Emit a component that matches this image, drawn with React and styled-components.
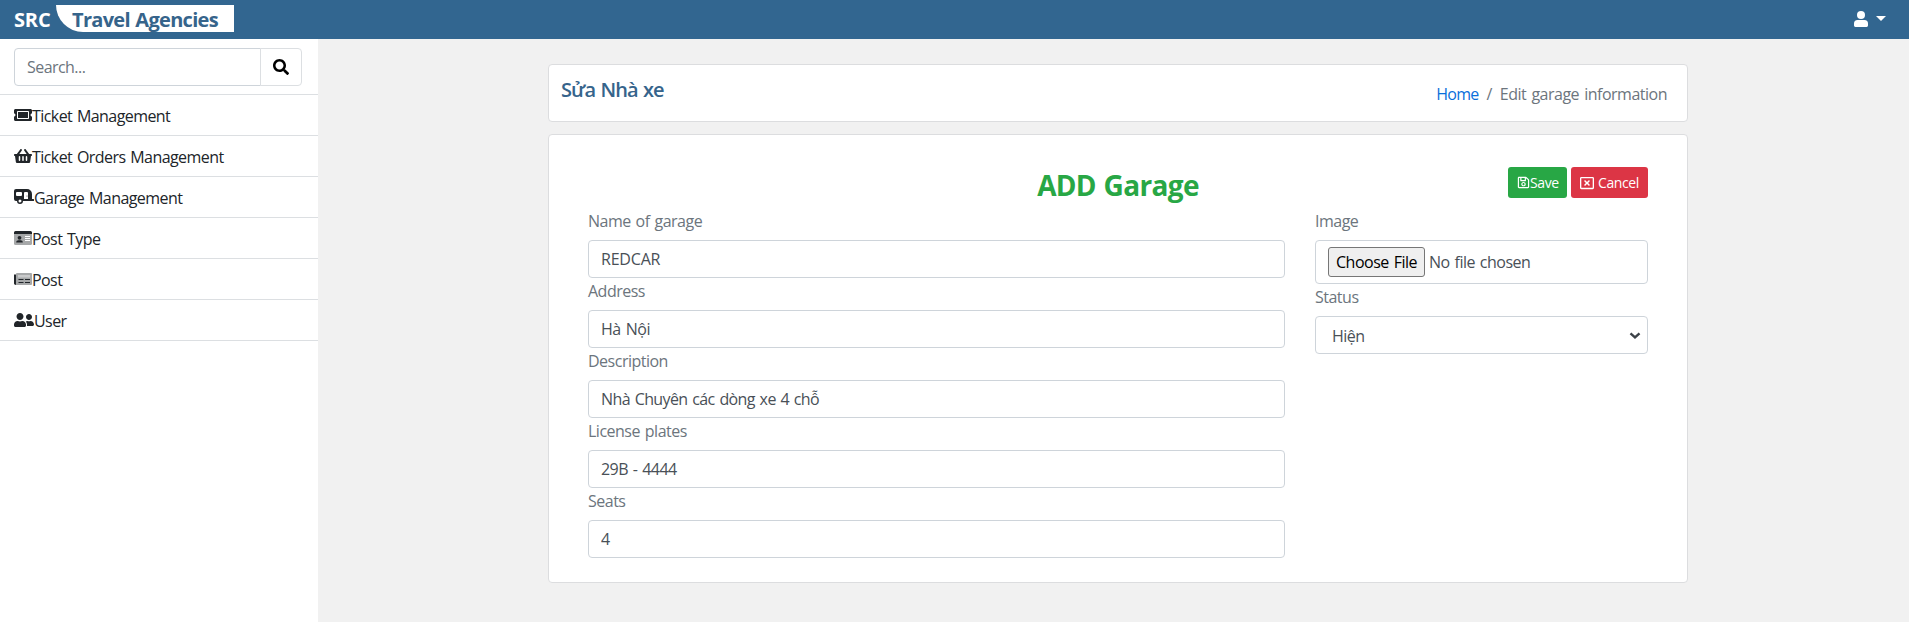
import React from 'react';
import styled, { createGlobalStyle } from 'styled-components';
import { FaTicketAlt, FaShoppingBasket, FaCaravan, FaUserFriends, FaSearch, FaRegSave, FaRegWindowClose } from 'react-icons/fa';

const Global = createGlobalStyle`
  *, *::before, *::after { box-sizing: border-box; }
  body {
    margin: 0;
    background: #f1f1f1;
    color: #212529;
    font: 16px/24px "Segoe UI", "Open Sans", "Noto Sans", sans-serif;
  }
  input, select, button { font: inherit; letter-spacing: inherit; word-spacing: inherit; }
`;

const Page = styled.div`
  display: flex;
  flex-direction: column;
  min-height: 622px;
`;

const Header = styled.header`
  display: flex;
  align-items: center;
  justify-content: space-between;
  height: 39px;
  padding: 0 23px 0 14px;
  background: #326690;
  color: #fff;
`;

const Brand = styled.div`
  display: flex;
  align-items: center;
  gap: 5px;
  font-size: 20px;
  font-weight: 700;
  line-height: 27px;
  white-space: nowrap;
`;

const BrandName = styled.span`
  width: 37px;
  letter-spacing: -0.15px;
`;

const BrandTag = styled.span`
  width: 178px;
  height: 27px;
  margin-top: -2px;
  padding: 1px 0 0 16px;
  border-bottom-left-radius: 27px;
  background: #fff;
  color: #36648b;
  letter-spacing: -0.7px;
  word-spacing: 1px;
`;

const UserMenu = styled.div`
  display: flex;
  align-items: center;
  gap: 8px;
  padding-bottom: 1px;
`;

const Caret = styled.span`
  margin-top: -1px;
  border: 5px solid transparent;
  border-top-color: #fff;
  border-bottom: 0;
`;

const Body = styled.div`
  display: flex;
  flex: 1;
`;

const Sidebar = styled.aside`
  width: 318px;
  background: #fff;
`;

const SearchBar = styled.div`
  display: flex;
  height: 56px;
  padding: 9px 16px 9px 14px;
  border-bottom: 1px solid #dcdfe2;
`;

const SearchInput = styled.input`
  width: 247px;
  height: 38px;
  padding: 6px 12px;
  border: 1px solid #ced4da;
  border-radius: 4px 0 0 4px;
  letter-spacing: -0.55px;
  &::placeholder { color: #6c757d; }
`;

const SearchButton = styled.button`
  display: flex;
  align-items: center;
  justify-content: center;
  width: 42px;
  height: 38px;
  margin-left: -1px;
  padding: 0;
  border: 1px solid #dcdfe2;
  border-radius: 0 4px 4px 0;
  background: #fff;
  color: #000;
`;

const MenuItem = styled.a`
  display: flex;
  align-items: center;
  height: 41px;
  padding-left: 14px;
  border-bottom: 1px solid #dcdfe2;
  color: #212529;
  letter-spacing: -0.57px;
  word-spacing: 1.2px;
  svg { flex: none; }
  span { padding-top: 1px; }
`;

const Main = styled.main`
  display: flex;
  flex-direction: column;
  gap: 12px;
  width: 1140px;
  margin: 25px 0 0 230px;
`;

const Card = styled.section`
  border: 1px solid #dcdddf;
  border-radius: 4px;
  background: #fff;
`;

const TitleCard = styled(Card)`
  display: flex;
  justify-content: space-between;
  height: 58px;
  padding: 13px 20px 0 12px;
`;

const PageTitle = styled.h1`
  margin: 0;
  color: #36648b;
  font-size: 20px;
  font-weight: 600;
  line-height: 24px;
  letter-spacing: -0.9px;
  word-spacing: 1px;
`;

const Breadcrumb = styled.nav`
  display: flex;
  gap: 8px;
  padding-top: 4px;
  color: #6c757d;
  letter-spacing: -0.5px;
  word-spacing: 1.5px;
`;

const HomeLink = styled.a`
  color: #0a6fdb;
  letter-spacing: -0.75px;
`;

const FormCard = styled(Card)`
  height: 449px;
  padding: 32px 39px 0;
`;

const FormHead = styled.div`
  display: grid;
  grid-template-columns: 1fr auto 1fr;
  height: 41px;
`;

const FormTitle = styled.h2`
  grid-column: 2;
  margin: 0;
  color: #28a745;
  font-size: 28px;
  font-weight: 700;
  line-height: 36px;
  letter-spacing: -0.65px;
  word-spacing: 1px;
`;

const Actions = styled.div`
  display: flex;
  justify-content: flex-end;
  gap: 4px;
`;

const ActionButton = styled.button`
  display: flex;
  align-items: center;
  gap: ${(p) => p.$gap}px;
  width: ${(p) => p.$width}px;
  height: 31px;
  padding: 0 0 0 9px;
  border: 0;
  border-radius: 3px;
  background: ${(p) => p.$color};
  color: #fff;
  font-size: 14px;
  letter-spacing: -0.4px;
  svg { flex: none; }
  span { padding-top: 1px; }
`;

const Columns = styled.div`
  display: grid;
  grid-template-columns: 697px 333px;
  gap: 30px;
  align-items: start;
`;

const Field = styled.label`
  display: flex;
  flex-direction: column;
  gap: 8px;
  padding-top: 2px;
  color: #6c757d;
  line-height: 22px;
  letter-spacing: -0.5px;
  word-spacing: 1.2px;
`;

const Control = styled.input`
  width: 100%;
  height: 38px;
  padding: 6px 12px;
  border: 1px solid #ced4da;
  border-radius: 4px;
  background: #fff;
  color: #495057;
  letter-spacing: ${(p) => p.$track ?? -0.45}px;
`;

const FileControl = styled.div`
  display: flex;
  align-items: center;
  gap: 4px;
  height: 44px;
  padding: 0 12px;
  border: 1px solid #ced4da;
  border-radius: 4px;
  color: #495057;
`;

const FileButton = styled.button`
  width: 97px;
  height: 30px;
  padding: 0;
  border: 1px solid #767676;
  border-radius: 3px;
  background: #efefef;
  color: #000;
  white-space: nowrap;
`;

const SelectBox = styled.div`
  display: flex;
  align-items: center;
  justify-content: space-between;
  height: 38px;
  padding: 2px 6px 0 16px;
  border: 1px solid #ced4da;
  border-radius: 4px;
  color: #495057;
`;

const PersonIcon = () => (
  <svg width="14" height="16" viewBox="0 0 14 16" fill="currentColor">
    <circle cx="7" cy="4" r="4" />
    <path d="M3.6 9h6.8A3.6 3.6 0 0 1 14 12.6v2A1.4 1.4 0 0 1 12.6 16H1.4A1.4 1.4 0 0 1 0 14.6v-2A3.6 3.6 0 0 1 3.6 9z" />
  </svg>
);

const CardIcon = () => (
  <svg width="18" height="16" viewBox="0 0 18 16">
    <path fill="#212529" d="M1.5 1h15A1.5 1.5 0 0 1 18 2.5V4H0V2.5A1.5 1.5 0 0 1 1.5 1z" />
    <path fill="#a6a8a9" d="M0 4h18v9.5a1.5 1.5 0 0 1-1.5 1.5h-15A1.5 1.5 0 0 1 0 13.5z" />
    <circle cx="5.5" cy="7.8" r="1.9" fill="#212529" />
    <path fill="#212529" d="M2.2 12.5c0-1.5 1-2.3 2.2-2.3h2.2c1.2 0 2.2.8 2.2 2.3z" />
    <path stroke="#fff" d="M11 6.5h5M11 8.5h5M11 10.5h5" />
  </svg>
);

const NewsIcon = () => (
  <svg width="18" height="16" viewBox="0 0 18 16">
    <path fill="#212529" d="M0 3.5h2V14C.8 14 0 13.3 0 12.3z" />
    <path fill="#a6a8a9" d="M3 2h14a1 1 0 0 1 1 1v10a1 1 0 0 1-1 1H2V3a1 1 0 0 1 1-1z" />
    <path fill="#c9cacb" d="M4 4h12v2.5H4z" />
    <path stroke="#212529" d="M4.5 8.5h5M4.5 11.5h5M11 8.5h5M11 11.5h5" />
  </svg>
);

const Chevron = () => (
  <svg width="12" height="8" viewBox="0 0 12 8" fill="none" stroke="#3c4248" strokeWidth="2.4">
    <path d="M1.5 1.3 6 5.4l4.5-4.1" />
  </svg>
);

const MENU = [
  { text: 'Ticket Management', icon: <FaTicketAlt size={18} /> },
  { text: 'Ticket Orders Management', icon: <FaShoppingBasket size={18} /> },
  { text: 'Garage Management', icon: <FaCaravan size={20} /> },
  { text: 'Post Type', icon: <CardIcon /> },
  { text: 'Post', icon: <NewsIcon /> },
  { text: 'User', icon: <FaUserFriends size={20} /> },
];

const FIELDS = [
  { label: 'Name of garage', value: 'REDCAR', track: -0.2 },
  { label: 'Address', value: 'Hà Nội' },
  { label: 'Description', value: 'Nhà Chuyên các dòng xe 4 chỗ', track: -0.61 },
  { label: 'License plates', value: '29B - 4444', track: -0.55 },
  { label: 'Seats', value: '4' },
];

export default function App() {
  return (
    <Page>
      <Global />
      <Header>
        <Brand>
          <BrandName>SRC</BrandName>
          <BrandTag>Travel Agencies</BrandTag>
        </Brand>
        <UserMenu>
          <PersonIcon />
          <Caret />
        </UserMenu>
      </Header>
      <Body>
        <Sidebar>
          <SearchBar>
            <SearchInput placeholder="Search..." />
            <SearchButton aria-label="Search"><FaSearch size={16} /></SearchButton>
          </SearchBar>
          {MENU.map((m) => (
            <MenuItem key={m.text}>{m.icon}<span>{m.text}</span></MenuItem>
          ))}
        </Sidebar>
        <Main>
          <TitleCard>
            <PageTitle>Sửa Nhà xe</PageTitle>
            <Breadcrumb>
              <HomeLink>Home</HomeLink>
              <span>/</span>
              <span>Edit garage information</span>
            </Breadcrumb>
          </TitleCard>
          <FormCard>
            <FormHead>
              <FormTitle>ADD Garage</FormTitle>
              <Actions>
                <ActionButton $color="#28a745" $width={59} $gap={-1}><FaRegSave size={13} /><span>Save</span></ActionButton>
                <ActionButton $color="#dc3545" $width={77} $gap={4}><FaRegWindowClose size={14} /><span>Cancel</span></ActionButton>
              </Actions>
            </FormHead>
            <Columns>
              <div>
                {FIELDS.map((f) => (
                  <Field key={f.label}>
                    {f.label}
                    <Control defaultValue={f.value} $track={f.track} />
                  </Field>
                ))}
              </div>
              <div>
                <Field as="div">
                  Image
                  <FileControl>
                    <FileButton>Choose File</FileButton>
                    <span>No file chosen</span>
                  </FileControl>
                </Field>
                <Field as="div">
                  Status
                  <SelectBox><span>Hiện</span><Chevron /></SelectBox>
                </Field>
              </div>
            </Columns>
          </FormCard>
        </Main>
      </Body>
    </Page>
  );
}
